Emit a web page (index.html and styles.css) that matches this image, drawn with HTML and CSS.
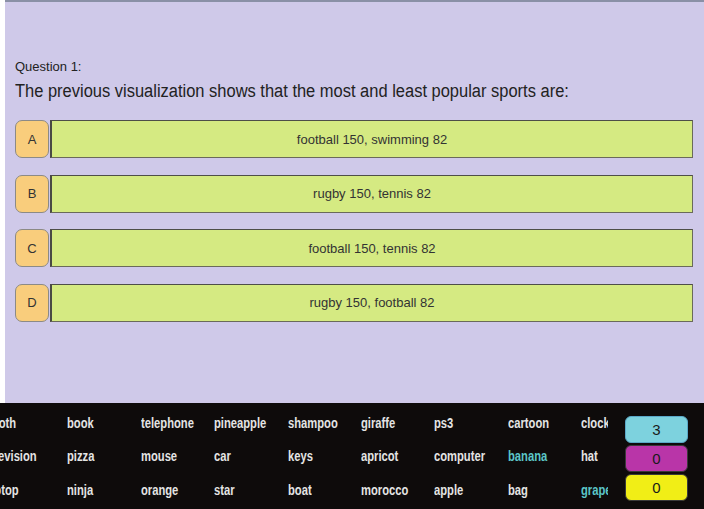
FILE: index.html
```html
<!DOCTYPE html>
<html>
<head>
<meta charset="utf-8">
<link rel="stylesheet" href="styles.css">
</head>
<body>
<div class="page">
  <section class="stage">
    <div class="qlabel">Question 1:</div>
    <div class="qtext"><span class="squeeze">The previous visualization shows that the most and least popular sports are:</span></div>
    <div class="answers">
      <div class="answer"><div class="letter">A</div><div class="bar">football 150, swimming 82</div></div>
      <div class="answer"><div class="letter">B</div><div class="bar">rugby 150, tennis 82</div></div>
      <div class="answer"><div class="letter">C</div><div class="bar">football 150, tennis 82</div></div>
      <div class="answer"><div class="letter">D</div><div class="bar">rugby 150, football 82</div></div>
    </div>
  </section>
  <section class="tray">
    <div class="words">
      <div class="grid">
        <span class="first"><b>booth</b></span><span><b>book</b></span><span><b>telephone</b></span><span><b>pineapple</b></span><span><b>shampoo</b></span><span><b>giraffe</b></span><span><b>ps3</b></span><span><b>cartoon</b></span><span><b>clock</b></span>
        <span class="first"><b>television</b></span><span><b>pizza</b></span><span><b>mouse</b></span><span><b>car</b></span><span><b>keys</b></span><span><b>apricot</b></span><span><b>computer</b></span><span class="hit"><b>banana</b></span><span><b>hat</b></span>
        <span class="first"><b>laptop</b></span><span><b>ninja</b></span><span><b>orange</b></span><span><b>star</b></span><span><b>boat</b></span><span><b>morocco</b></span><span><b>apple</b></span><span><b>bag</b></span><span class="hit"><b>grape</b></span>
      </div>
    </div>
    <div class="scores">
      <div class="score cyan">3</div>
      <div class="score magenta">0</div>
      <div class="score yellow">0</div>
    </div>
  </section>
</div>
</body>
</html>
```
FILE: styles.css
```css
html, body {
  margin: 0;
  padding: 0;
  background: #ffffff;
}
body {
  width: 704px;
  height: 509px;
  overflow: hidden;
  font-family: "Liberation Sans", Arial, sans-serif;
}
.page {
  display: flex;
  flex-direction: column;
  width: 704px;
  height: 509px;
}
.stage {
  margin-left: 5px;
  background: #cfc9e9;
  border-top: 2px solid #8a90a6;
  padding: 57px 11px 0 10px;
  box-sizing: border-box;
  height: 403px;
  color: #222;
}
.qlabel {
  font-size: 13px;
  line-height: 16px;
}
.qtext {
  font-size: 18px;
  line-height: 24px;
  margin-top: 4px;
  white-space: nowrap;
}
.squeeze {
  display: inline-block;
  transform: scaleX(0.915);
  transform-origin: left center;
}
.answers {
  display: flex;
  flex-direction: column;
  gap: 16.5px;
  margin-top: 17px;
}
.answer {
  display: flex;
  gap: 1px;
  height: 38px;
}
.letter {
  width: 32px;
  flex: none;
  background: #f9cd7c;
  border: 1px solid #8c8a86;
  border-radius: 7px;
  display: flex;
  align-items: center;
  justify-content: center;
  font-size: 13px;
  color: #333;
}
.bar {
  flex: 1;
  background: #d5ea82;
  border: 1px solid #6a6a5a;
  border-top-color: #4e4e48;
  border-left: 2px solid #4a4a44;
  display: flex;
  align-items: center;
  justify-content: center;
  font-size: 13px;
  color: #333;
}
.tray {
  flex: 1;
  background: #0e0b0b;
  display: flex;
}
.words {
  width: 608px;
  overflow: hidden;
  flex: none;
}
.grid {
  display: grid;
  grid-template-columns: repeat(9, 73.4px);
  grid-auto-rows: 33.5px;
  margin-left: -6px;
  padding-top: 3px;
  font-size: 14px;
  color: #e4e4e4;
  width: 661px;
}
.grid span {
  display: flex;
  align-items: center;
  white-space: nowrap;
  overflow: hidden;
}
.grid .first {
  overflow: visible;
}
.grid b {
  display: inline-block;
  transform: scaleX(0.8);
  transform-origin: left center;
}
.grid .first b {
  margin-left: -9px;
}
.hit {
  color: #5cc6c8;
}
.scores {
  display: flex;
  flex-direction: column;
  gap: 2px;
  padding: 13px 0 0 17px;
}
.score {
  width: 61px;
  height: 25px;
  border-radius: 6px;
  border: 1px solid #3a3a3a;
  display: flex;
  align-items: center;
  justify-content: center;
  font-size: 15px;
  color: #1a1a1a;
}
.cyan { background: #7dd2de; border-color: #5aa8c8; }
.magenta { background: #b935a8; }
.yellow { background: #f1ee16; }
```
